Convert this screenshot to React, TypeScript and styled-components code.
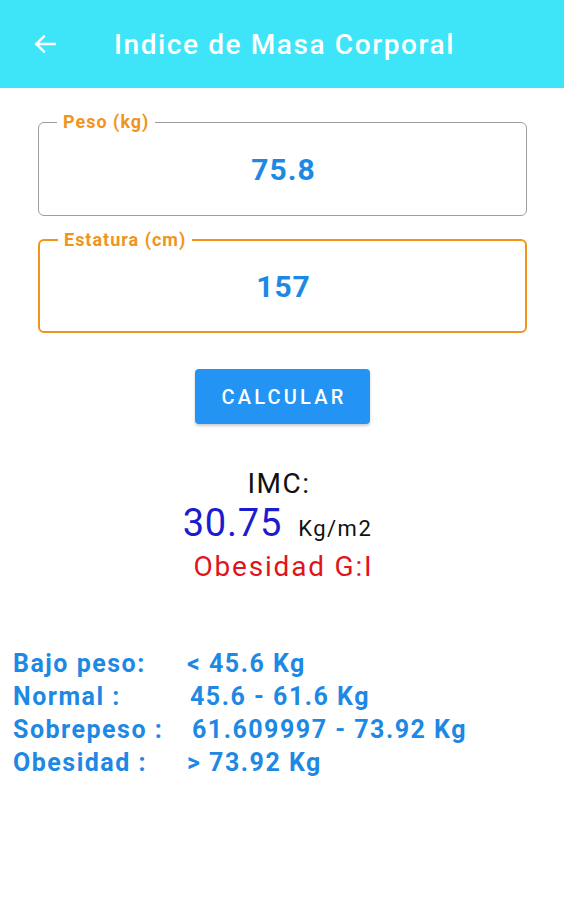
import styled, { createGlobalStyle } from "styled-components"

const GlobalStyle = createGlobalStyle`
  body {
    margin: 0;
    background: #ffffff;
    font-family: Roboto, "Noto Sans", sans-serif;
  }
`

const ranges = [
  { label: 'Bajo peso:', value: '< 45.6 Kg', indent: 187 },
  { label: 'Normal :', value: '45.6 - 61.6 Kg', indent: 190 },
  { label: 'Sobrepeso :', value: '61.609997 - 73.92 Kg', indent: 192 },
  { label: 'Obesidad :', value: '> 73.92 Kg', indent: 187 },
]

const Screen = styled.div`
  width: 564px;
  min-height: 900px;
  background: #ffffff;
`

const AppBar = styled.header`
  height: 88px;
  background: #3ee5f9;
  display: flex;
  align-items: center;
  padding-left: 30px;
  box-sizing: border-box;
`

const BackBtn = styled.button`
  border: 0;
  background: transparent;
  padding: 0;
  width: 30px;
  height: 30px;
  display: flex;
  align-items: center;
  justify-content: center;
  cursor: pointer;
`

const Title = styled.h1`
  margin: 0 0 0 54px;
  color: #ffffff;
  font-size: 28px;
  font-weight: 500;
  letter-spacing: 1.6px;
`

const Form = styled.div`
  padding: 34px 37px 0 38px;
  display: flex;
  flex-direction: column;
  gap: 23px;
`

const Field = styled.div<{ focused?: boolean }>`
  position: relative;
  height: 94px;
  box-sizing: border-box;
  border: ${p => p.focused ? '2px solid #f0951c' : '1px solid #9e9e9e'};
  border-radius: 6px;
  display: flex;
  align-items: center;
  justify-content: center;
`

const FieldLabel = styled.span`
  position: absolute;
  top: -11px;
  left: 18px;
  background: #ffffff;
  color: #f0951c;
  font-size: 18px;
  font-weight: 700;
  letter-spacing: 1px;
  padding: 0 6px;
  line-height: 20px;
`

const Value = styled.div`
  color: #1e88e5;
  font-size: 30px;
  font-weight: 700;
  letter-spacing: 1px;
  margin-left: 2px;
`

const ButtonRow = styled.div`
  display: flex;
  justify-content: center;
  margin-top: 36px;
`

const CalcButton = styled.button`
  width: 175px;
  height: 55px;
  border: 0;
  border-radius: 4px;
  background: #2394f3;
  color: #ffffff;
  font-family: Roboto, sans-serif;
  font-size: 20px;
  font-weight: 500;
  letter-spacing: 3.2px;
  padding: 0 0 0 3px;
  box-shadow: 0 2px 3px rgba(0, 0, 0, 0.2);
  cursor: pointer;
  margin-left: 1px;
`

const Result = styled.div`
  display: flex;
  flex-direction: column;
  align-items: center;
  margin-top: 43px;
`

const ImcLabel = styled.div`
  color: #111111;
  font-size: 28px;
  letter-spacing: 1.5px;
  line-height: 34px;
  margin-right: 6px;
`

const ImcRow = styled.div`
  display: flex;
  align-items: baseline;
  gap: 16px;
  line-height: 44px;
  margin-right: 9px;
`

const ImcValue = styled.span`
  color: #1c1ccf;
  font-size: 38px;
  letter-spacing: 0.8px;
`

const Unit = styled.span`
  color: #111111;
  font-size: 22px;
  letter-spacing: 1.5px;
`

const Category = styled.div`
  color: #e0141c;
  font-size: 28px;
  letter-spacing: 1.8px;
  line-height: 32px;
  margin-left: 3px;
`

const Ranges = styled.div`
  margin-top: 64px;
  padding-left: 13px;
  display: flex;
  flex-direction: column;
`

const RangeRow = styled.div`
  position: relative;
  color: #1e88e5;
  font-size: 25px;
  font-weight: 700;
  letter-spacing: 1.5px;
  line-height: 33px;
  height: 33px;
  white-space: nowrap;
`

const RangeValue = styled.span<{ indent: number }>`
  margin-left: ${p => p.indent}px;
`

const RangeLabel = styled.span`
  position: absolute;
  left: 0;
  top: 0;
`

export default function App() {
  return <Screen>
    <GlobalStyle />
    <AppBar>
      <BackBtn aria-label="back">
        <svg width="26" height="26" viewBox="0 0 24 24" fill="none" stroke="#ffffff" strokeWidth="2.2" strokeLinecap="square">
          <path d="M21 12H4M11 5l-7 7 7 7" />
        </svg>
      </BackBtn>
      <Title>Indice de Masa Corporal</Title>
    </AppBar>
    <Form>
      <Field>
        <FieldLabel>Peso (kg)</FieldLabel>
        <Value>75.8</Value>
      </Field>
      <Field focused>
        <FieldLabel>Estatura (cm)</FieldLabel>
        <Value>157</Value>
      </Field>
    </Form>
    <ButtonRow>
      <CalcButton>CALCULAR</CalcButton>
    </ButtonRow>
    <Result>
      <ImcLabel>IMC:</ImcLabel>
      <ImcRow>
        <ImcValue>30.75</ImcValue>
        <Unit>Kg/m2</Unit>
      </ImcRow>
      <Category>Obesidad G:I</Category>
    </Result>
    <Ranges>
      {ranges.map(r => (
        <RangeRow key={r.label}>
          <RangeLabel>{r.label}</RangeLabel>
          <RangeValue indent={r.indent - 13}>{r.value}</RangeValue>
        </RangeRow>
      ))}
    </Ranges>
  </Screen>
}
